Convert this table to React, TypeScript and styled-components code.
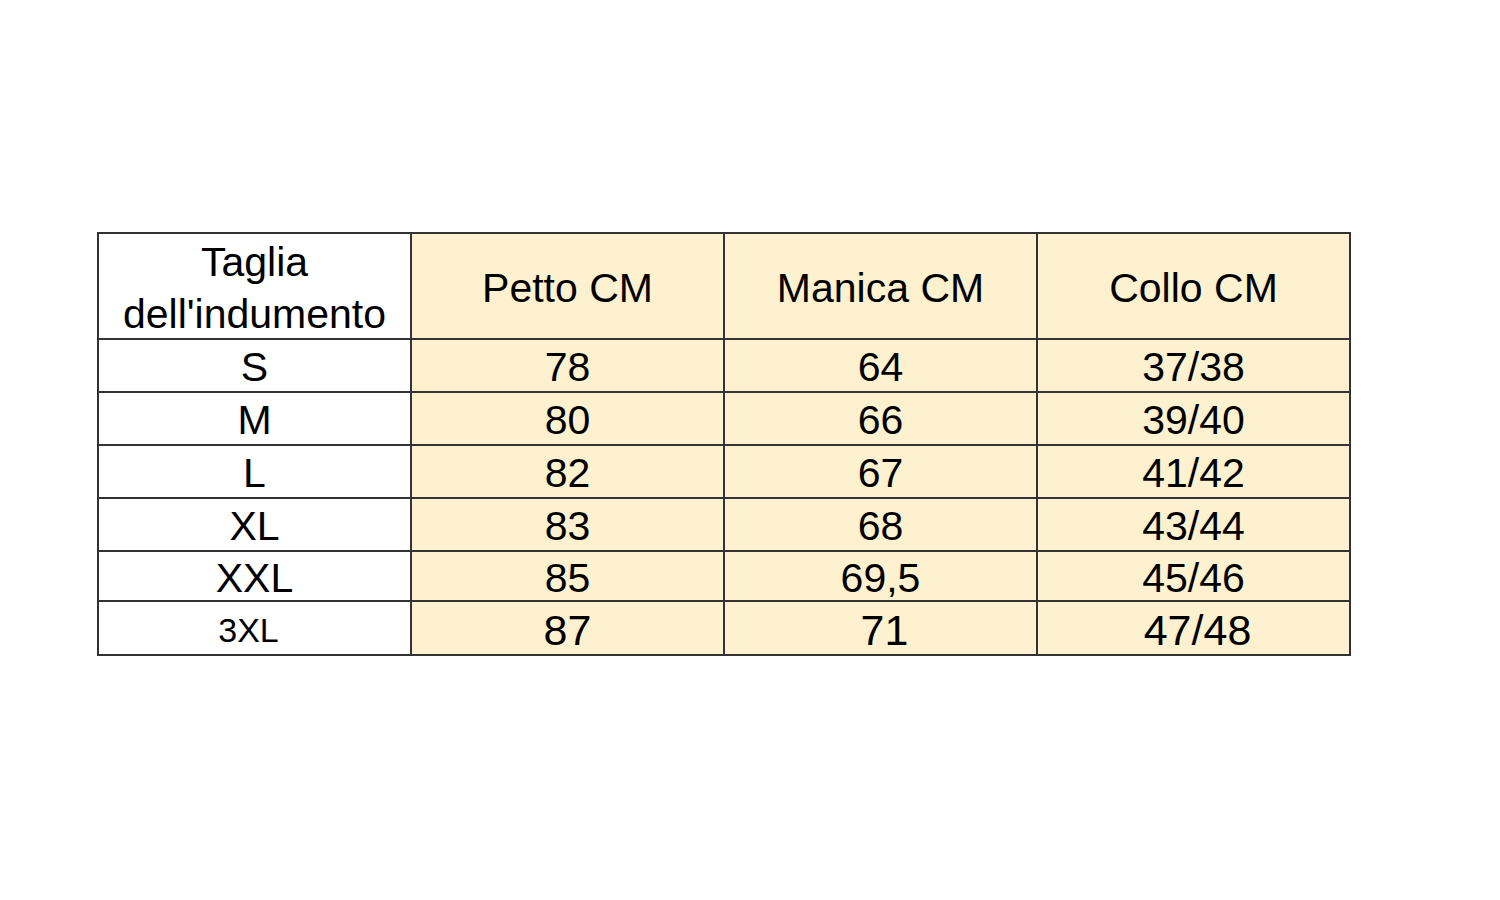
import React from "react";
import styled, { createGlobalStyle } from "styled-components";

const Global = createGlobalStyle`
  html, body { margin: 0; padding: 0; background: #ffffff; }
  body { font-family: "Liberation Sans", Arial, sans-serif; color: #000; }
`;

const Page = styled.div`
  width: 1500px;
  height: 900px;
  padding: 232px 0 0 97px;
  box-sizing: border-box;
`;

const Grid = styled.div`
  display: grid;
  grid-template-columns: repeat(4, 313px);
  grid-template-rows: 106px 53px 53px 53px 53px 50px 54px;
  width: max-content;
  border-top: 2px solid #333;
  border-left: 2px solid #333;
`;

const Cell = styled.div<{ $shaded?: boolean; $size?: number; $dx?: number }>`
  display: flex;
  align-items: center;
  justify-content: center;
  text-align: center;
  background: ${(p) => (p.$shaded ? "#fdf1cf" : "#ffffff")};
  border-right: 2px solid #333;
  border-bottom: 2px solid #333;
  font-size: ${(p) => p.$size ?? 41}px;
  line-height: 52px;
  padding-top: 3px;
  padding-left: ${(p) => Math.max(0, p.$dx ?? 0)}px;
  padding-right: ${(p) => Math.max(0, -(p.$dx ?? 0))}px;
  box-sizing: border-box;
`;

const rows: { size: string; sizeFont?: number; sizeDx?: number; valFont?: number; valDx?: number; vals: string[] }[] = [
  { size: "S", vals: ["78", "64", "37/38"] },
  { size: "M", vals: ["80", "66", "39/40"] },
  { size: "L", vals: ["82", "67", "41/42"] },
  { size: "XL", vals: ["83", "68", "43/44"] },
  { size: "XXL", vals: ["85", "69,5", "45/46"] },
  { size: "3XL", sizeFont: 34, sizeDx: -12, valFont: 43, valDx: 8, vals: ["87", "71", "47/48"] },
];

export default function App() {
  return (
    <>
      <Global />
      <Page>
        <Grid>
          <Cell>
            Taglia
            <br />
            dell'indumento
          </Cell>
          <Cell $shaded>Petto CM</Cell>
          <Cell $shaded>Manica CM</Cell>
          <Cell $shaded>Collo CM</Cell>
          {rows.map((r) => (
            <React.Fragment key={r.size}>
              <Cell $size={r.sizeFont} $dx={r.sizeDx}>
                {r.size}
              </Cell>
              {r.vals.map((v, i) => (
                <Cell key={i} $shaded $size={r.valFont} $dx={i === 0 ? 0 : r.valDx}>
                  {v}
                </Cell>
              ))}
            </React.Fragment>
          ))}
        </Grid>
      </Page>
    </>
  );
}
